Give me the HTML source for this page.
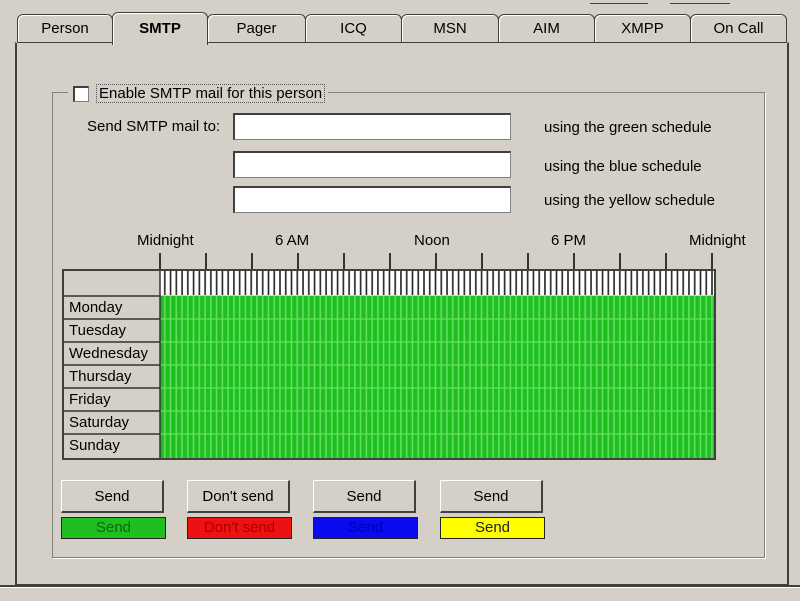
<!DOCTYPE html>
<html><head><style>
body{margin:0;width:800px;height:600px;background:#d4d0c8;font-family:"Liberation Sans",sans-serif;font-size:15px;color:#000;position:relative;overflow:hidden}
.a{position:absolute}
.tab{position:absolute;top:14px;height:27px;border:1px solid #404040;border-radius:6px 6px 0 0;background:#d4d0c8;text-align:center;line-height:28px;box-shadow:inset 1px 1px 0 #fff}
.inp{position:absolute;left:233px;width:275px;height:24px;background:#fff;border:1px solid #808080;border-top:2px solid #404040;border-left:2px solid #404040}
.lbl{position:absolute;font-size:15px}
.btn{position:absolute;width:103px;height:33px;background:#d4d0c8;border:1px solid #fff;border-right:2px solid #404040;border-bottom:2px solid #404040;text-align:center;line-height:32px;box-sizing:border-box}
.col{position:absolute;width:105px;height:22px;border:1px solid #222;box-sizing:border-box;text-align:center;line-height:20px}
</style></head><body>
<div class="a" style="left:590px;top:0;width:58px;height:3px;border-bottom:1px solid #404040"></div>
<div class="a" style="left:670px;top:0;width:60px;height:3px;border-bottom:1px solid #404040"></div>
<div class="a" style="left:15px;top:42px;width:770px;height:541px;border:1px solid #fff;border-left:2px solid #404040;border-right:2px solid #404040;border-bottom:2px solid #404040"></div>
<div class="tab" style="left:17px;width:94px">Person</div>
<div class="tab" style="left:207px;width:97px">Pager</div>
<div class="tab" style="left:305px;width:95px">ICQ</div>
<div class="tab" style="left:401px;width:96px">MSN</div>
<div class="tab" style="left:498px;width:95px">AIM</div>
<div class="tab" style="left:594px;width:95px">XMPP</div>
<div class="tab" style="left:690px;width:95px">On Call</div>
<div class="tab" style="left:112px;width:94px;top:12px;height:32px;line-height:32px;font-weight:bold;border-bottom:none;z-index:2">SMTP</div>
<div class="a" style="left:52px;top:92px;width:711px;height:464px;border:1px solid #808080;box-shadow:1px 1px 0 #fff"></div>
<div class="a" style="left:68px;top:84px;width:260px;height:18px;background:#d4d0c8"></div>
<div class="a" style="left:73px;top:86px;width:13px;height:13px;background:#fff;border:1px solid #808080;border-top:2px solid #404040;border-left:2px solid #404040"></div>
<div class="lbl" style="left:96px;top:84px;border:1px dotted #555;padding:0 2px">Enable SMTP mail for this person</div>
<div class="lbl" style="left:87px;top:118px">Send SMTP mail to:</div>
<div class="inp" style="top:113px"></div>
<div class="inp" style="top:151px"></div>
<div class="inp" style="top:186px"></div>
<div class="lbl" style="left:544px;top:119px">using the green schedule</div>
<div class="lbl" style="left:544px;top:158px">using the blue schedule</div>
<div class="lbl" style="left:544px;top:192px">using the yellow schedule</div>
<div class="lbl" style="left:137px;top:232px">Midnight</div>
<div class="lbl" style="left:275px;top:232px">6 AM</div>
<div class="lbl" style="left:414px;top:232px">Noon</div>
<div class="lbl" style="left:551px;top:232px">6 PM</div>
<div class="lbl" style="left:689px;top:232px">Midnight</div>
<svg class="a" style="left:0;top:0" width="800" height="600">
<defs>
<pattern id="hp" x="160" y="0" width="5.76" height="600" patternUnits="userSpaceOnUse"><rect width="5.76" height="600" fill="#fff"/><rect x="4" width="1.6" height="600" fill="#222"/></pattern>
<pattern id="gp" x="160" y="0" width="5.76" height="600" patternUnits="userSpaceOnUse"><rect width="5.76" height="600" fill="#1fbf1f"/><rect x="4" width="1.5" height="600" fill="#66e066"/></pattern>
</defs>
<g stroke="#000" stroke-width="1.5">
<line x1="160" y1="253" x2="160" y2="269"/><line x1="206" y1="253" x2="206" y2="269"/><line x1="252" y1="253" x2="252" y2="269"/><line x1="298" y1="253" x2="298" y2="269"/><line x1="344" y1="253" x2="344" y2="269"/><line x1="390" y1="253" x2="390" y2="269"/><line x1="436" y1="253" x2="436" y2="269"/><line x1="482" y1="253" x2="482" y2="269"/><line x1="528" y1="253" x2="528" y2="269"/><line x1="574" y1="253" x2="574" y2="269"/><line x1="620" y1="253" x2="620" y2="269"/><line x1="666" y1="253" x2="666" y2="269"/><line x1="712" y1="253" x2="712" y2="269"/>
</g>
<rect x="63" y="270" width="652" height="189" fill="#d4d0c8" stroke="#404040" stroke-width="2"/>
<rect x="160" y="271" width="554" height="24" fill="url(#hp)"/>
<rect x="160" y="296" width="554" height="162" fill="url(#gp)"/>
<g stroke="#66e066" stroke-width="1.2"><line x1="160" y1="319" x2="714" y2="319"/><line x1="160" y1="342" x2="714" y2="342"/><line x1="160" y1="365" x2="714" y2="365"/><line x1="160" y1="388" x2="714" y2="388"/><line x1="160" y1="411" x2="714" y2="411"/><line x1="160" y1="434" x2="714" y2="434"/></g>
<g stroke="#333" stroke-width="1.5"><line x1="64" y1="296" x2="160" y2="296"/><line x1="64" y1="319" x2="160" y2="319"/><line x1="64" y1="342" x2="160" y2="342"/><line x1="64" y1="365" x2="160" y2="365"/><line x1="64" y1="388" x2="160" y2="388"/><line x1="64" y1="411" x2="160" y2="411"/><line x1="64" y1="434" x2="160" y2="434"/><line x1="160" y1="271" x2="160" y2="458"/></g>
</svg>
<div class="lbl" style="left:69px;top:299px">Monday</div>
<div class="lbl" style="left:69px;top:322px">Tuesday</div>
<div class="lbl" style="left:69px;top:345px">Wednesday</div>
<div class="lbl" style="left:69px;top:368px">Thursday</div>
<div class="lbl" style="left:69px;top:391px">Friday</div>
<div class="lbl" style="left:69px;top:414px">Saturday</div>
<div class="lbl" style="left:69px;top:437px">Sunday</div>
<div class="btn" style="left:61px;top:480px">Send</div>
<div class="btn" style="left:187px;top:480px">Don't send</div>
<div class="btn" style="left:313px;top:480px">Send</div>
<div class="btn" style="left:440px;top:480px">Send</div>
<div class="col" style="left:61px;top:517px;background:#1fbf1f;color:#0a6a0a">Send</div>
<div class="col" style="left:187px;top:517px;background:#ee1111;color:#a00">Don't send</div>
<div class="col" style="left:313px;top:517px;background:#0a0aee;color:#0000b0">Send</div>
<div class="col" style="left:440px;top:517px;background:#ffff00;color:#222">Send</div>
<div class="a" style="left:0;top:585px;width:800px;height:2px;background:#404040"></div>
<div class="a" style="left:0;top:587px;width:800px;height:13px;background:#d4d0c8;border-top:1px solid #fff"></div>
</body></html>
